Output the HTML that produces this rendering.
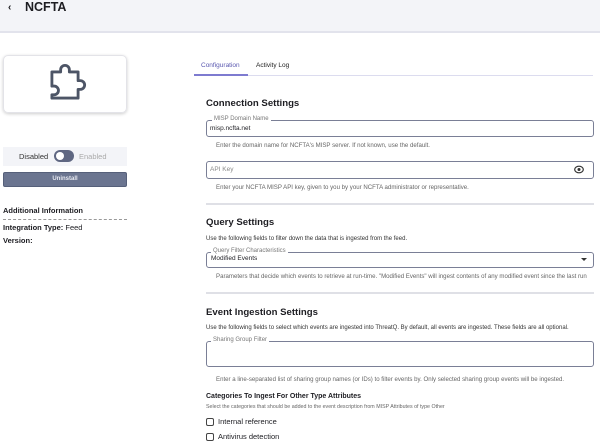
<!DOCTYPE html>
<html><head><style>
*{margin:0;padding:0;box-sizing:border-box}
body{width:600px;height:446px;overflow:hidden;background:#fff;font-family:"Liberation Sans",sans-serif;color:#1d1d22;position:relative}
.a{position:absolute;white-space:nowrap}
.hdr{left:0;top:0;width:600px;height:33px;background:#f3f4f8;border-bottom:2px solid #e2e3ec}
.card{left:3px;top:55px;width:124px;height:58px;border:1px solid #e3e3e8;border-radius:5px;box-shadow:0 1px 3px rgba(0,0,0,.2)}
.h{font-weight:bold;font-size:9.6px;color:#1d1d22}
.fld{border:1px solid #7a7f96;border-radius:3px;left:206px;width:388px}
.lbl{font-size:6px;color:#777;background:#fff;padding:0 2px}
.help{font-size:6.1px;color:#666}
.desc{font-size:6px;color:#333}
.div{left:206px;width:388px;height:2px;background:#dfe0e6}
.cb{width:8px;height:8px;border:1px solid #444;border-radius:2px}
</style></head><body>
<div class="a hdr"></div>
<div class="a" style="left:8px;top:2px;font-size:10px;font-weight:bold">&lsaquo;</div>
<div class="a" style="left:25px;top:0px;font-size:12.5px;font-weight:bold">NCFTA</div>

<div class="a card">
<svg class="a" style="left:37px;top:5px" width="48" height="48" viewBox="0 0 44 44"><path d="M10 10h8v-2a4 4 0 0 1 8 0v2h8v8h2a4 4 0 0 1 0 8h-2v8h-24v-3h2a4 4 0 0 0 0-8h-2z" fill="none" stroke="#4d5566" stroke-width="2.6" stroke-linejoin="round"/></svg>
</div>

<div class="a" style="left:3px;top:147px;width:124px;height:19px;background:#f3f4f8"></div>
<div class="a" style="left:19px;top:152px;font-size:7.5px;color:#333">Disabled</div>
<div class="a" style="left:54px;top:150px;width:20px;height:12px;border-radius:6px;background:#5f6782"></div>
<div class="a" style="left:56px;top:152px;width:8px;height:8px;border-radius:4px;background:#fff"></div>
<div class="a" style="left:79px;top:152px;font-size:7.5px;color:#aaa">Enabled</div>
<div class="a" style="left:3px;top:172px;width:124px;height:15px;background:#6b7590;border-radius:2px;border:1px solid #56607a;color:#e9ebf2;font-size:6px;font-weight:bold;text-align:center;line-height:13px">Uninstall</div>

<div class="a" style="left:3px;top:206px;font-size:7.5px;font-weight:bold">Additional Information</div>
<div class="a" style="left:3px;top:219px;width:124px;border-top:1px dashed #999"></div>
<div class="a" style="left:3px;top:223px;font-size:7.5px"><b>Integration Type:</b> Feed</div>
<div class="a" style="left:3px;top:236px;font-size:7.5px;font-weight:bold">Version:</div>

<div class="a" style="left:201px;top:62px;font-size:6.5px;color:#5a58b0">Configuration</div>
<div class="a" style="left:256px;top:62px;font-size:6.5px;color:#222">Activity Log</div>
<div class="a" style="left:194px;top:75px;width:399px;height:1px;background:#dcdcef"></div>
<div class="a" style="left:194px;top:74px;width:54px;height:2px;background:#7e7bd0"></div>

<div class="a h" style="left:206px;top:98px">Connection Settings</div>
<div class="a fld" style="top:120px;height:17px"></div>
<div class="a lbl" style="left:212px;top:116px">MISP Domain Name</div>
<div class="a" style="left:210px;top:125px;font-size:6.5px">misp.ncfta.net</div>
<div class="a help" style="left:216px;top:142px">Enter the domain name for NCFTA's MISP server. If not known, use the default.</div>

<div class="a fld" style="top:161px;height:18px"></div>
<div class="a" style="left:210px;top:166px;font-size:6.5px;color:#888">API Key</div>
<svg class="a" style="left:574px;top:165px" width="10" height="9" viewBox="0 0 10 9"><ellipse cx="5" cy="4.5" rx="4.3" ry="3.3" fill="none" stroke="#333" stroke-width="1.2"/><circle cx="5" cy="4.5" r="1.5" fill="#333"/></svg>
<div class="a help" style="left:216px;top:184px">Enter your NCFTA MISP API key, given to you by your NCFTA administrator or representative.</div>

<div class="a div" style="top:203px"></div>
<div class="a h" style="left:206px;top:217px">Query Settings</div>
<div class="a desc" style="left:206px;top:236px">Use the following fields to filter down the data that is ingested from the feed.</div>
<div class="a fld" style="top:252px;height:16px"></div>
<div class="a lbl" style="left:211px;top:248px">Query Filter Characteristics</div>
<div class="a" style="left:211px;top:255px;font-size:6.5px">Modified Events</div>
<div class="a" style="left:581px;top:258px;border-left:3px solid transparent;border-right:3px solid transparent;border-top:3px solid #333"></div>
<div class="a help" style="left:216px;top:273px">Parameters that decide which events to retrieve at run-time. "Modified Events" will ingest contents of any modified event since the last run</div>

<div class="a div" style="top:292px"></div>
<div class="a h" style="left:206px;top:307px">Event Ingestion Settings</div>
<div class="a desc" style="left:206px;top:325px">Use the following fields to select which events are ingested into ThreatQ. By default, all events are ingested. These fields are all optional.</div>
<div class="a fld" style="top:341px;height:26px"></div>
<div class="a lbl" style="left:211px;top:337px">Sharing Group Filter</div>
<div class="a help" style="left:216px;top:376px">Enter a line-separated list of sharing group names (or IDs) to filter events by. Only selected sharing group events will be ingested.</div>

<div class="a" style="left:206px;top:393px;font-size:7px;font-weight:bold">Categories To Ingest For Other Type Attributes</div>
<div class="a help" style="left:206px;top:404px;font-size:5.3px">Select the categories that should be added to the event description from MISP Attributes of type Other</div>
<div class="a cb" style="left:206px;top:418px"></div>
<div class="a" style="left:218px;top:417px;font-size:7.5px">Internal reference</div>
<div class="a cb" style="left:206px;top:433px"></div>
<div class="a" style="left:218px;top:432px;font-size:7.5px">Antivirus detection</div>
</body></html>
